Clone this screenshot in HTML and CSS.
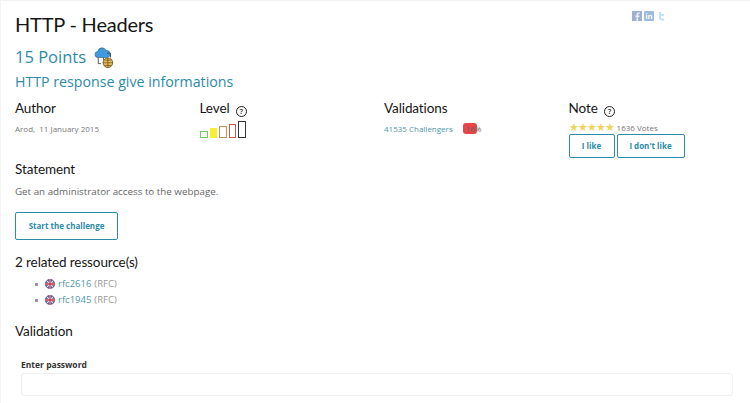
FILE: index.html
```html
<!DOCTYPE html>
<html lang="en">
<head>
  <meta charset="UTF-8" />
  <title>HTTP - Headers</title>
  <link rel="stylesheet" href="styles.css">
</head>
<body>
  <main class="page">
    <header class="top">
      <h1>HTTP - Headers</h1>
      <div class="share">
        <svg width="10" height="10" viewBox="0 0 10 10"><rect width="10" height="10" fill="#9fb0d0"/><path d="M6 10V6h1.400l.2-1.500H6V3.600c0-.5.2-.7.7-.7h1V1.500H6.500C5 1.500 4.500 2.400 4.500 3.500v1H3.400V6h1.100v4z" fill="#e8edf5"/></svg>
        <svg width="10" height="10" viewBox="0 0 10 10"><rect width="10" height="10" rx="1" fill="#9dbbdc"/><path d="M2 4h1.300v4H2zM2 2h1.300v1.200H2zM4.200 4h1.200v.6C5.700 4.200 6.200 3.900 6.800 3.900 7.800 3.900 8.300 4.500 8.300 5.600V8H7V5.900C7 5.300 6.800 5 6.300 5 5.800 5 5.500 5.300 5.500 5.900V8H4.200z" fill="#f2f6fb"/></svg>
        <svg width="10" height="10" viewBox="0 0 10 10"><path d="M3 1h2v2h3v2H5v1.500c0 .6.300.9.900.9H8v2H5.500C3.900 9.400 3 8.500 3 7z" fill="#bfe6f5"/></svg>
      </div>
    </header>

    <h2 class="points">15 Points
      <svg class="cat-icon" width="21" height="21" viewBox="0 0 24 24">
        <path d="M6 12a3.500 3.500 0 0 1-.5-7A5 5 0 0 1 15 4a3.500 3.500 0 0 1 1 8z" fill="#3f9ae0" stroke="#26506e" stroke-width=".6"/>
        <path d="M6 12v7h3M12 12v3M16 7h4v5" fill="none" stroke="#444" stroke-width="1"/>
        <circle cx="17" cy="18" r="5.500" fill="#eec25a" stroke="#4a3a10" stroke-width=".8"/>
        <path d="M11.500 18h11M17 12.500v11M13 15h8M13 21h8" fill="none" stroke="#4a3a10" stroke-width=".7"/>
      </svg>
    </h2>
    <h2 class="subtitle">HTTP response give informations</h2>

    <section class="meta">
      <div class="meta-col">
        <h3>Author</h3>
        <p class="small">Arod,&nbsp; 11 January 2015</p>
      </div>
      <div class="meta-col">
        <h3>Level <span class="help">?</span></h3>
        <div class="levels">
          <span class="lvl lvl1"></span>
          <span class="lvl lvl2"></span>
          <span class="lvl lvl3"></span>
          <span class="lvl lvl4"></span>
          <span class="lvl lvl5"></span>
        </div>
      </div>
      <div class="meta-col">
        <h3>Validations</h3>
        <p class="small"><a href="#">41535 Challengers</a><span class="rate"><span class="rate-bar"></span><span class="rate-num">16%</span></span></p>
      </div>
      <div class="meta-col">
        <h3>Note <span class="help">?</span></h3>
        <p class="small votes"><span class="stars">★★★★★</span> 1636 Votes</p>
        <div class="note-btns">
          <a class="btn btn-like" href="#">I like</a>
          <a class="btn btn-dislike" href="#">I don't like</a>
        </div>
      </div>
    </section>

    <h3 class="statement-title">Statement</h3>
    <p class="text">Get an administrator access to the webpage.</p>
    <a class="btn btn-start" href="#">Start the challenge</a>

    <h3 class="res-title">2 related ressource(s)</h3>
    <ul class="res">
      <li><svg class="flag" width="10" height="10" viewBox="0 0 11 11"><use href="#uk"/></svg><a href="#">rfc2616</a> <span>(RFC)</span></li>
      <li><svg class="flag" width="10" height="10" viewBox="0 0 11 11"><use href="#uk"/></svg><a href="#">rfc1945</a> <span>(RFC)</span></li>
    </ul>
    <svg width="0" height="0" class="defs">
      <symbol id="uk" viewBox="0 0 11 11">
        <clipPath id="round"><circle cx="5.500" cy="5.500" r="5.500"/></clipPath>
        <g clip-path="url(#round)">
          <rect width="11" height="11" fill="#2f3f8a"/>
          <path d="M0 0l11 11M11 0L0 11" stroke="#e8e4ea" stroke-width="1.300"/>
          <path d="M5.500 0v11M0 5.500h11" stroke="#e8e4ea" stroke-width="2.600"/>
          <path d="M5.500 0v11M0 5.500h11" stroke="#c8323f" stroke-width="1.400"/>
        </g>
      </symbol>
    </svg>

    <h3 class="val-title">Validation</h3>
    <form class="val-form">
      <label for="pw">Enter password</label>
      <input id="pw" type="text" />
    </form>
  </main>
</body>
</html>
```

FILE: styles.css
```css
* { box-sizing: border-box; margin: 0; padding: 0; }
html, body { height: 100%; overflow: hidden; }
body { background: #f3f3f3; font-family: "Open Sans", "Noto Sans", sans-serif; color: #666; padding: 1px 0 0 1px; }
.page { background: #fff; height: 403px; padding: 11px 15px 0 14px; }
a { color: #4f97ae; text-decoration: none; }
h1, h2, h3 { font-family: "Lato", "Noto Sans", sans-serif; font-weight: 400; }

.top { display: flex; justify-content: space-between; }
h1 { font-size: 20px; line-height: 24px; color: #161616; letter-spacing: -.2px; }
.share { display: flex; gap: 2px; margin: -1px 69px 0 0; align-items: flex-start; }
.share svg { display: block; }

.points { font-family: "Open Sans", sans-serif; font-size: 16.500px; line-height: 24px; color: #2b8ba8; margin-top: 9px; display: flex; align-items: center; gap: 7px; }
.subtitle { font-family: "Open Sans", sans-serif; font-size: 14.200px; line-height: 20px; color: #2b8ba8; margin-top: 3px; }

.meta { display: grid; grid-template-columns: repeat(4, 184.5px); margin-top: 7px; }
.meta-col { min-height: 56px; }
.meta h3, .statement-title, .res-title, .val-title { font-size: 13.500px; line-height: 18px; color: #161616; letter-spacing: -.1px; }
.help { display: inline-block; width: 11px; height: 11px; margin-left: 3px; border: 1px solid #222; border-radius: 50%; font-family: "Open Sans", sans-serif; font-size: 7px; line-height: 9px; text-align: center; vertical-align: -1px; font-weight: 600; letter-spacing: 0; }
.small { font-size: 8px; line-height: 14px; margin-top: 5px; color: #777; }
.levels { display: flex; align-items: flex-end; gap: 2px; height: 18px; margin-top: 3px; }
.lvl { display: block; border: 1px solid; }
.lvl1 { width: 8px; height: 7px; border-color: #6fcb62; }
.lvl2 { width: 7px; height: 10px; background: #f8ee33; border-color: #f8ee33; }
.lvl3 { width: 8px; height: 12px; border-color: #c98f5a; }
.lvl4 { width: 7px; height: 14px; border-color: #c8584a; }
.lvl5 { width: 8px; height: 17px; border-color: #333; }
.rate { position: relative; display: inline-block; margin-left: 10px; padding-left: 3px; color: #666; }
.rate-bar { position: absolute; left: 0; top: 1px; width: 14px; height: 11px; border-radius: 3px; background: #ea4444; }
.rate-num { position: relative; }
.stars { color: #f3d35b; font-size: 11px; letter-spacing: -1px; margin-right: 1px; }
.votes { margin-top: 4px; line-height: 12px; }
.note-btns { display: flex; gap: 2px; }

.btn { display: block; border: 1px solid #2b8ba8; border-radius: 2px; font-size: 8px; font-weight: 700; color: #2b8ba8; text-align: center; }
.btn-like { width: 46px; height: 24px; line-height: 22px; }
.btn-dislike { width: 68px; height: 24px; line-height: 22px; }
.btn-start { width: 103px; height: 28px; line-height: 26px; margin-top: 13px; }

.statement-title { margin-top: 2px; }
.text { font-size: 9.800px; line-height: 14px; margin-top: 7px; }
.res-title { margin-top: 13px; }
.res { list-style: none; margin: 5px 0 0 20px; font-size: 9.500px; color: #999; }
.res li { display: flex; align-items: center; gap: 3px; line-height: 16px; }
.res li::before { content: ""; width: 3px; height: 3px; background: #999; margin-right: 4px; }
.flag { display: block; }
.defs { position: absolute; }

.val-title { margin-top: 14px; }
.val-form { padding: 19px 2px 0 6px; }
.val-form label { display: block; font-size: 8.500px; font-weight: 700; line-height: 12px; color: #333; }
.val-form input { display: block; width: 100%; height: 23px; margin-top: 2px; border: 1px solid #efefef; border-radius: 3px; background: #fff; }
```
